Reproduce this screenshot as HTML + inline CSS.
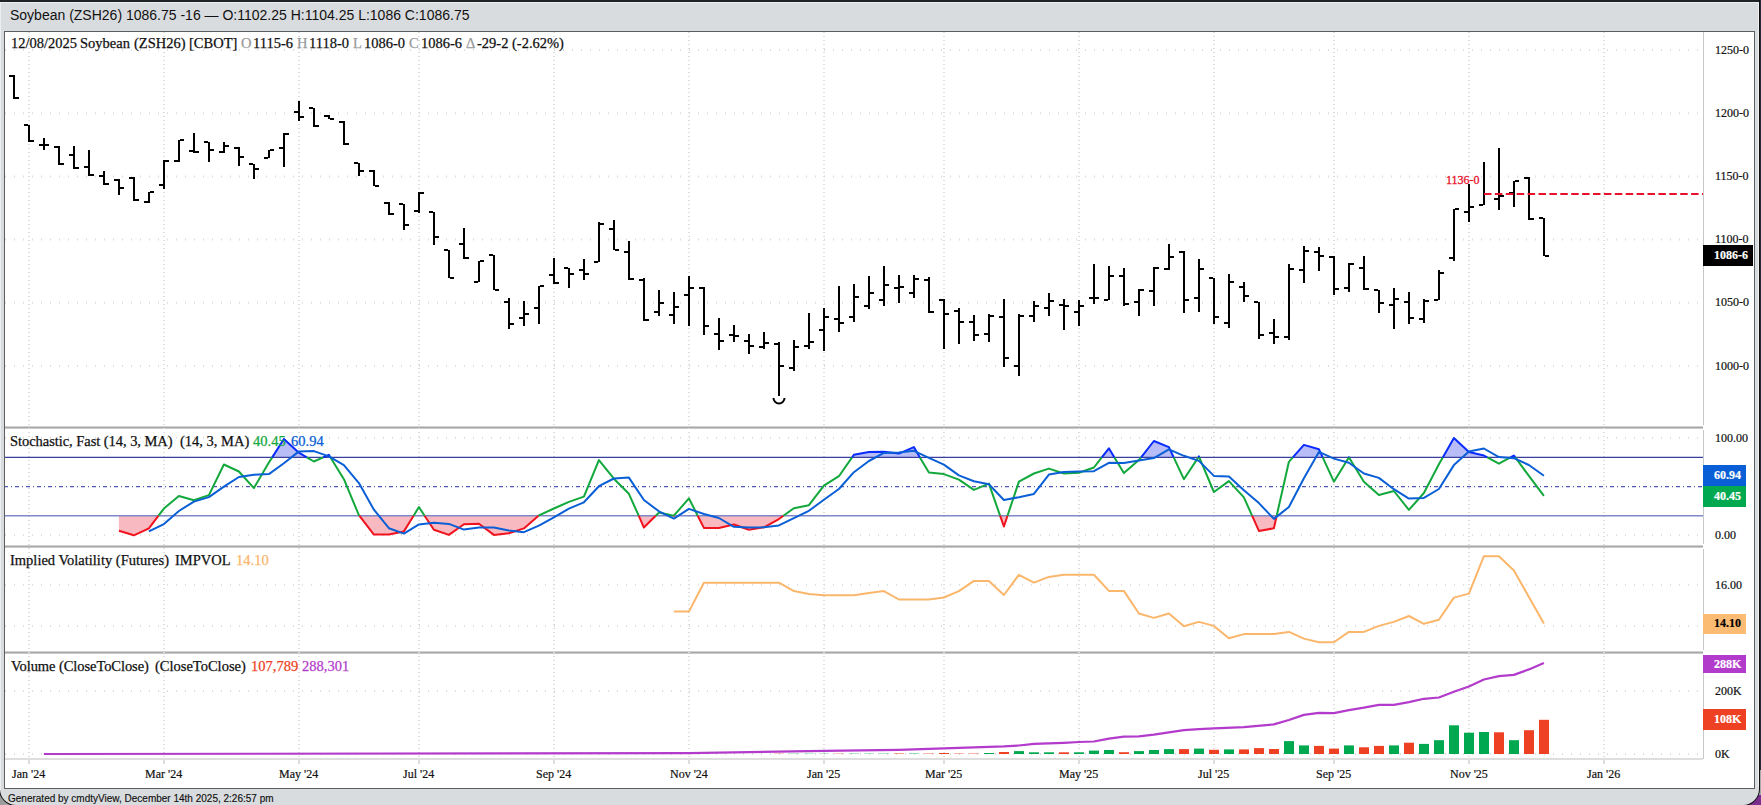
<!DOCTYPE html>
<html><head><meta charset="utf-8">
<style>
html,body{margin:0;padding:0;}
body{width:1761px;height:805px;position:relative;overflow:hidden;background:#2c2838;font-family:"Liberation Serif",serif;}
#win{position:absolute;left:0;top:0;width:1759px;height:805px;background:#d9dcdf;border-radius:0 0 16px 16px;box-shadow:0 0 0 1px #111;}
#hl{position:absolute;left:0;top:2px;width:1759px;height:1px;background:#eceef0;}
#hlL{position:absolute;left:0;top:2px;width:1px;height:788px;background:#eceef0;}
#hlR{position:absolute;left:1758px;top:2px;width:1px;height:785px;background:#eef0f2;}
.abs{position:absolute;white-space:pre;}
#topbar{position:absolute;left:0;top:0;width:1759px;height:2px;background:#1f2327;}
#hdr{left:10px;top:5px;font-family:"Liberation Sans",sans-serif;font-size:14px;line-height:20px;color:#111;}
#frame{position:absolute;left:4px;top:31px;width:1749px;height:756px;border:1px solid #5e5e5e;background:#fff;}
.chart{position:absolute;left:0;top:0;}
.sep{position:absolute;left:5px;width:1698px;height:3px;background:linear-gradient(#d2d2d2 0,#d2d2d2 1px,#a8a8a8 1px,#a8a8a8 2px,#cacaca 2px);}
.ser{font-family:"Liberation Serif",serif;font-size:14.5px;line-height:16px;color:#111;-webkit-text-stroke:0.25px currentColor;}
.ax{font-family:"Liberation Serif",serif;font-size:12px;line-height:14px;color:#111;-webkit-text-stroke:0.2px currentColor;}
.g{color:#9a9a9a;}
#foot{left:8px;top:792px;font-family:"Liberation Sans",sans-serif;font-size:10px;line-height:14px;color:#111;-webkit-text-stroke:0.15px #111;}
</style></head><body>
<div style="position:absolute;left:0;top:770px;width:20px;height:35px;background:linear-gradient(90deg,#9a9a9a,#b8b8b8)"></div>
<div style="position:absolute;left:1740px;top:795px;width:21px;height:10px;background:#7c2e8e"></div>
<div style="position:absolute;left:1740px;top:770px;width:21px;height:25px;background:#a8a8a8"></div>
<div id="win"></div><div id="hl"></div><div id="hlL"></div><div id="hlR"></div>
<div id="topbar"></div>
<div class="abs" id="hdr">Soybean (ZSH26) 1086.75 -16 — O:1102.25 H:1104.25 L:1086 C:1086.75</div>
<div id="frame"></div>
<div class="sep" style="top:426px"></div>
<div class="sep" style="top:545px"></div>
<div class="sep" style="top:651px"></div>
<div style="position:absolute;left:5px;top:758px;width:1698px;height:2px;background:#dedede"></div>
<div style="position:absolute;left:1703px;top:32px;width:1px;height:393px;background:#c8c8c8"></div>
<div style="position:absolute;left:1703px;top:430px;width:1px;height:114px;background:#c8c8c8"></div>
<div style="position:absolute;left:1703px;top:549px;width:1px;height:101px;background:#c8c8c8"></div>
<div style="position:absolute;left:1703px;top:655px;width:1px;height:104px;background:#c8c8c8"></div>
<svg class="chart" width="1761" height="805" viewBox="0 0 1761 805">
<g stroke="#dcdcdc" stroke-width="2" stroke-dasharray="1,3"><line x1="29.0" y1="32" x2="29.0" y2="759" /><line x1="164.0" y1="32" x2="164.0" y2="759" /><line x1="299.0" y1="32" x2="299.0" y2="759" /><line x1="419.0" y1="32" x2="419.0" y2="759" /><line x1="554.0" y1="32" x2="554.0" y2="759" /><line x1="689.0" y1="32" x2="689.0" y2="759" /><line x1="824.0" y1="32" x2="824.0" y2="759" /><line x1="944.0" y1="32" x2="944.0" y2="759" /><line x1="1079.0" y1="32" x2="1079.0" y2="759" /><line x1="1214.0" y1="32" x2="1214.0" y2="759" /><line x1="1334.0" y1="32" x2="1334.0" y2="759" /><line x1="1469.0" y1="32" x2="1469.0" y2="759" /><line x1="1604.0" y1="32" x2="1604.0" y2="759" /></g>
<g stroke="#dcdcdc" stroke-width="2" stroke-dasharray="1,8"><line x1="5" y1="50.0" x2="1703" y2="50.0" /><line x1="5" y1="113.2" x2="1703" y2="113.2" /><line x1="5" y1="176.4" x2="1703" y2="176.4" /><line x1="5" y1="239.6" x2="1703" y2="239.6" /><line x1="5" y1="302.8" x2="1703" y2="302.8" /><line x1="5" y1="366.0" x2="1703" y2="366.0" /><line x1="5" y1="437.8" x2="1703" y2="437.8" /><line x1="5" y1="535.2" x2="1703" y2="535.2" /><line x1="5" y1="584.8" x2="1703" y2="584.8" /><line x1="5" y1="625.9" x2="1703" y2="625.9" /><line x1="5" y1="691.0" x2="1703" y2="691.0" /><line x1="5" y1="754.0" x2="1703" y2="754.0" /></g>
<rect x="28" y="760" width="2" height="4" fill="#dedede"/><rect x="163" y="760" width="2" height="4" fill="#dedede"/><rect x="298" y="760" width="2" height="4" fill="#dedede"/><rect x="418" y="760" width="2" height="4" fill="#dedede"/><rect x="553" y="760" width="2" height="4" fill="#dedede"/><rect x="688" y="760" width="2" height="4" fill="#dedede"/><rect x="823" y="760" width="2" height="4" fill="#dedede"/><rect x="943" y="760" width="2" height="4" fill="#dedede"/><rect x="1078" y="760" width="2" height="4" fill="#dedede"/><rect x="1213" y="760" width="2" height="4" fill="#dedede"/><rect x="1333" y="760" width="2" height="4" fill="#dedede"/><rect x="1468" y="760" width="2" height="4" fill="#dedede"/><rect x="1603" y="760" width="2" height="4" fill="#dedede"/>
<g fill="#000"><rect x="13" y="75" width="2" height="24"/><rect x="9" y="75" width="4" height="2"/><rect x="15" y="97" width="4" height="2"/><rect x="28" y="125" width="2" height="17"/><rect x="24" y="124" width="4" height="2"/><rect x="30" y="140" width="4" height="2"/><rect x="43" y="138" width="2" height="12"/><rect x="39" y="144" width="4" height="2"/><rect x="45" y="144" width="4" height="2"/><rect x="58" y="146" width="2" height="19"/><rect x="54" y="146" width="4" height="2"/><rect x="60" y="163" width="4" height="2"/><rect x="73" y="146" width="2" height="23"/><rect x="69" y="154" width="4" height="2"/><rect x="75" y="167" width="4" height="2"/><rect x="88" y="150" width="2" height="26"/><rect x="84" y="166" width="4" height="2"/><rect x="90" y="174" width="4" height="2"/><rect x="103" y="171" width="2" height="14"/><rect x="99" y="175" width="4" height="2"/><rect x="105" y="183" width="4" height="2"/><rect x="118" y="179" width="2" height="16"/><rect x="114" y="179" width="4" height="2"/><rect x="120" y="187" width="4" height="2"/><rect x="133" y="177" width="2" height="24"/><rect x="129" y="177" width="4" height="2"/><rect x="135" y="199" width="4" height="2"/><rect x="148" y="192" width="2" height="11"/><rect x="144" y="201" width="4" height="2"/><rect x="150" y="191" width="4" height="2"/><rect x="163" y="160" width="2" height="29"/><rect x="159" y="184" width="4" height="2"/><rect x="165" y="160" width="4" height="2"/><rect x="178" y="140" width="2" height="22"/><rect x="174" y="160" width="4" height="2"/><rect x="180" y="139" width="4" height="2"/><rect x="193" y="133" width="2" height="20"/><rect x="189" y="150" width="4" height="2"/><rect x="195" y="151" width="4" height="2"/><rect x="208" y="142" width="2" height="20"/><rect x="204" y="141" width="4" height="2"/><rect x="210" y="149" width="4" height="2"/><rect x="223" y="142" width="2" height="11"/><rect x="219" y="151" width="4" height="2"/><rect x="225" y="145" width="4" height="2"/><rect x="238" y="147" width="2" height="19"/><rect x="234" y="147" width="4" height="2"/><rect x="240" y="156" width="4" height="2"/><rect x="253" y="164" width="2" height="15"/><rect x="249" y="163" width="4" height="2"/><rect x="255" y="168" width="4" height="2"/><rect x="268" y="150" width="2" height="8"/><rect x="264" y="157" width="4" height="2"/><rect x="270" y="149" width="4" height="2"/><rect x="283" y="133" width="2" height="34"/><rect x="279" y="147" width="4" height="2"/><rect x="285" y="133" width="4" height="2"/><rect x="298" y="101" width="2" height="20"/><rect x="294" y="111" width="4" height="2"/><rect x="300" y="116" width="4" height="2"/><rect x="313" y="108" width="2" height="19"/><rect x="309" y="107" width="4" height="2"/><rect x="315" y="125" width="4" height="2"/><rect x="328" y="115" width="2" height="4"/><rect x="324" y="115" width="4" height="2"/><rect x="330" y="118" width="4" height="2"/><rect x="343" y="121" width="2" height="24"/><rect x="339" y="121" width="4" height="2"/><rect x="345" y="143" width="4" height="2"/><rect x="358" y="163" width="2" height="13"/><rect x="354" y="162" width="4" height="2"/><rect x="360" y="170" width="4" height="2"/><rect x="373" y="170" width="2" height="16"/><rect x="369" y="170" width="4" height="2"/><rect x="375" y="185" width="4" height="2"/><rect x="388" y="202" width="2" height="13"/><rect x="384" y="202" width="4" height="2"/><rect x="390" y="213" width="4" height="2"/><rect x="403" y="204" width="2" height="26"/><rect x="399" y="203" width="4" height="2"/><rect x="405" y="224" width="4" height="2"/><rect x="418" y="192" width="2" height="21"/><rect x="414" y="210" width="4" height="2"/><rect x="420" y="192" width="4" height="2"/><rect x="433" y="212" width="2" height="33"/><rect x="429" y="211" width="4" height="2"/><rect x="435" y="236" width="4" height="2"/><rect x="448" y="250" width="2" height="28"/><rect x="444" y="249" width="4" height="2"/><rect x="450" y="277" width="4" height="2"/><rect x="463" y="228" width="2" height="31"/><rect x="459" y="243" width="4" height="2"/><rect x="465" y="257" width="4" height="2"/><rect x="478" y="261" width="2" height="21"/><rect x="474" y="281" width="4" height="2"/><rect x="480" y="260" width="4" height="2"/><rect x="493" y="255" width="2" height="35"/><rect x="489" y="254" width="4" height="2"/><rect x="495" y="289" width="4" height="2"/><rect x="508" y="298" width="2" height="31"/><rect x="504" y="301" width="4" height="2"/><rect x="510" y="323" width="4" height="2"/><rect x="523" y="301" width="2" height="25"/><rect x="519" y="317" width="4" height="2"/><rect x="525" y="313" width="4" height="2"/><rect x="538" y="286" width="2" height="38"/><rect x="534" y="307" width="4" height="2"/><rect x="540" y="285" width="4" height="2"/><rect x="553" y="258" width="2" height="26"/><rect x="549" y="274" width="4" height="2"/><rect x="555" y="282" width="4" height="2"/><rect x="568" y="268" width="2" height="20"/><rect x="564" y="267" width="4" height="2"/><rect x="570" y="273" width="4" height="2"/><rect x="583" y="259" width="2" height="21"/><rect x="579" y="269" width="4" height="2"/><rect x="585" y="273" width="4" height="2"/><rect x="598" y="222" width="2" height="40"/><rect x="594" y="261" width="4" height="2"/><rect x="600" y="223" width="4" height="2"/><rect x="613" y="220" width="2" height="30"/><rect x="609" y="228" width="4" height="2"/><rect x="615" y="249" width="4" height="2"/><rect x="628" y="241" width="2" height="39"/><rect x="624" y="251" width="4" height="2"/><rect x="630" y="278" width="4" height="2"/><rect x="643" y="278" width="2" height="43"/><rect x="639" y="279" width="4" height="2"/><rect x="645" y="319" width="4" height="2"/><rect x="658" y="290" width="2" height="26"/><rect x="654" y="311" width="4" height="2"/><rect x="660" y="302" width="4" height="2"/><rect x="673" y="292" width="2" height="32"/><rect x="669" y="314" width="4" height="2"/><rect x="675" y="306" width="4" height="2"/><rect x="688" y="276" width="2" height="50"/><rect x="684" y="294" width="4" height="2"/><rect x="690" y="287" width="4" height="2"/><rect x="703" y="287" width="2" height="48"/><rect x="699" y="287" width="4" height="2"/><rect x="705" y="325" width="4" height="2"/><rect x="718" y="318" width="2" height="32"/><rect x="714" y="333" width="4" height="2"/><rect x="720" y="340" width="4" height="2"/><rect x="733" y="325" width="2" height="17"/><rect x="729" y="334" width="4" height="2"/><rect x="735" y="335" width="4" height="2"/><rect x="748" y="334" width="2" height="20"/><rect x="744" y="340" width="4" height="2"/><rect x="750" y="345" width="4" height="2"/><rect x="763" y="332" width="2" height="17"/><rect x="759" y="346" width="4" height="2"/><rect x="765" y="342" width="4" height="2"/><rect x="778" y="342" width="2" height="54"/><rect x="774" y="343" width="4" height="2"/><rect x="780" y="365" width="4" height="2"/><rect x="793" y="340" width="2" height="31"/><rect x="789" y="367" width="4" height="2"/><rect x="795" y="346" width="4" height="2"/><rect x="808" y="313" width="2" height="36"/><rect x="804" y="345" width="4" height="2"/><rect x="810" y="341" width="4" height="2"/><rect x="823" y="308" width="2" height="43"/><rect x="819" y="329" width="4" height="2"/><rect x="825" y="316" width="4" height="2"/><rect x="838" y="286" width="2" height="46"/><rect x="834" y="318" width="4" height="2"/><rect x="840" y="322" width="4" height="2"/><rect x="853" y="284" width="2" height="38"/><rect x="849" y="316" width="4" height="2"/><rect x="855" y="296" width="4" height="2"/><rect x="868" y="276" width="2" height="33"/><rect x="864" y="305" width="4" height="2"/><rect x="870" y="292" width="4" height="2"/><rect x="883" y="266" width="2" height="40"/><rect x="879" y="299" width="4" height="2"/><rect x="885" y="284" width="4" height="2"/><rect x="898" y="275" width="2" height="28"/><rect x="894" y="287" width="4" height="2"/><rect x="900" y="286" width="4" height="2"/><rect x="913" y="275" width="2" height="23"/><rect x="909" y="292" width="4" height="2"/><rect x="915" y="278" width="4" height="2"/><rect x="928" y="277" width="2" height="36"/><rect x="924" y="279" width="4" height="2"/><rect x="930" y="311" width="4" height="2"/><rect x="943" y="299" width="2" height="50"/><rect x="939" y="299" width="4" height="2"/><rect x="945" y="313" width="4" height="2"/><rect x="958" y="308" width="2" height="36"/><rect x="954" y="310" width="4" height="2"/><rect x="960" y="321" width="4" height="2"/><rect x="973" y="315" width="2" height="26"/><rect x="969" y="321" width="4" height="2"/><rect x="975" y="334" width="4" height="2"/><rect x="988" y="314" width="2" height="28"/><rect x="984" y="333" width="4" height="2"/><rect x="990" y="315" width="4" height="2"/><rect x="1003" y="299" width="2" height="68"/><rect x="999" y="316" width="4" height="2"/><rect x="1005" y="357" width="4" height="2"/><rect x="1018" y="314" width="2" height="62"/><rect x="1014" y="365" width="4" height="2"/><rect x="1020" y="315" width="4" height="2"/><rect x="1033" y="301" width="2" height="21"/><rect x="1029" y="315" width="4" height="2"/><rect x="1035" y="305" width="4" height="2"/><rect x="1048" y="293" width="2" height="23"/><rect x="1044" y="307" width="4" height="2"/><rect x="1050" y="300" width="4" height="2"/><rect x="1063" y="299" width="2" height="31"/><rect x="1059" y="304" width="4" height="2"/><rect x="1065" y="305" width="4" height="2"/><rect x="1078" y="300" width="2" height="26"/><rect x="1074" y="311" width="4" height="2"/><rect x="1080" y="305" width="4" height="2"/><rect x="1093" y="264" width="2" height="40"/><rect x="1089" y="297" width="4" height="2"/><rect x="1095" y="297" width="4" height="2"/><rect x="1108" y="266" width="2" height="34"/><rect x="1104" y="299" width="4" height="2"/><rect x="1110" y="275" width="4" height="2"/><rect x="1123" y="268" width="2" height="38"/><rect x="1119" y="275" width="4" height="2"/><rect x="1125" y="303" width="4" height="2"/><rect x="1138" y="289" width="2" height="27"/><rect x="1134" y="301" width="4" height="2"/><rect x="1140" y="289" width="4" height="2"/><rect x="1153" y="267" width="2" height="39"/><rect x="1149" y="290" width="4" height="2"/><rect x="1155" y="267" width="4" height="2"/><rect x="1168" y="244" width="2" height="26"/><rect x="1164" y="268" width="4" height="2"/><rect x="1170" y="256" width="4" height="2"/><rect x="1183" y="251" width="2" height="62"/><rect x="1179" y="251" width="4" height="2"/><rect x="1185" y="299" width="4" height="2"/><rect x="1198" y="259" width="2" height="53"/><rect x="1194" y="297" width="4" height="2"/><rect x="1200" y="268" width="4" height="2"/><rect x="1213" y="278" width="2" height="46"/><rect x="1209" y="277" width="4" height="2"/><rect x="1215" y="316" width="4" height="2"/><rect x="1228" y="274" width="2" height="54"/><rect x="1224" y="322" width="4" height="2"/><rect x="1230" y="281" width="4" height="2"/><rect x="1243" y="282" width="2" height="20"/><rect x="1239" y="286" width="4" height="2"/><rect x="1245" y="295" width="4" height="2"/><rect x="1258" y="302" width="2" height="37"/><rect x="1254" y="301" width="4" height="2"/><rect x="1260" y="334" width="4" height="2"/><rect x="1273" y="319" width="2" height="25"/><rect x="1269" y="332" width="4" height="2"/><rect x="1275" y="336" width="4" height="2"/><rect x="1288" y="264" width="2" height="76"/><rect x="1284" y="336" width="4" height="2"/><rect x="1290" y="268" width="4" height="2"/><rect x="1303" y="246" width="2" height="37"/><rect x="1299" y="269" width="4" height="2"/><rect x="1305" y="250" width="4" height="2"/><rect x="1318" y="247" width="2" height="24"/><rect x="1314" y="251" width="4" height="2"/><rect x="1320" y="255" width="4" height="2"/><rect x="1333" y="256" width="2" height="39"/><rect x="1329" y="256" width="4" height="2"/><rect x="1335" y="288" width="4" height="2"/><rect x="1348" y="263" width="2" height="29"/><rect x="1344" y="287" width="4" height="2"/><rect x="1350" y="263" width="4" height="2"/><rect x="1363" y="256" width="2" height="34"/><rect x="1359" y="267" width="4" height="2"/><rect x="1365" y="288" width="4" height="2"/><rect x="1378" y="290" width="2" height="23"/><rect x="1374" y="289" width="4" height="2"/><rect x="1380" y="302" width="4" height="2"/><rect x="1393" y="288" width="2" height="41"/><rect x="1389" y="304" width="4" height="2"/><rect x="1395" y="298" width="4" height="2"/><rect x="1408" y="292" width="2" height="32"/><rect x="1404" y="301" width="4" height="2"/><rect x="1410" y="317" width="4" height="2"/><rect x="1423" y="299" width="2" height="24"/><rect x="1419" y="318" width="4" height="2"/><rect x="1425" y="300" width="4" height="2"/><rect x="1438" y="270" width="2" height="30"/><rect x="1434" y="299" width="4" height="2"/><rect x="1440" y="272" width="4" height="2"/><rect x="1453" y="209" width="2" height="52"/><rect x="1449" y="257" width="4" height="2"/><rect x="1455" y="208" width="4" height="2"/><rect x="1468" y="184" width="2" height="38"/><rect x="1464" y="211" width="4" height="2"/><rect x="1470" y="206" width="4" height="2"/><rect x="1483" y="162" width="2" height="43"/><rect x="1479" y="204" width="4" height="2"/><rect x="1485" y="193" width="4" height="2"/><rect x="1498" y="148" width="2" height="62"/><rect x="1494" y="198" width="4" height="2"/><rect x="1500" y="195" width="4" height="2"/><rect x="1513" y="181" width="2" height="26"/><rect x="1509" y="192" width="4" height="2"/><rect x="1515" y="180" width="4" height="2"/><rect x="1528" y="177" width="2" height="43"/><rect x="1524" y="177" width="4" height="2"/><rect x="1530" y="218" width="4" height="2"/><rect x="1543" y="218" width="2" height="38"/><rect x="1539" y="217" width="4" height="2"/><rect x="1545" y="255" width="4" height="2"/></g>
<path d="M773.5,398 a5.5,5.5 0 0 0 11,0" fill="none" stroke="#000" stroke-width="2"/>
<line x1="1484" y1="194" x2="1703" y2="194" stroke="#e8102a" stroke-width="2.2" stroke-dasharray="7.5,3.4"/>
<polygon fill="#f9b9c0" points="118.9,515.7 118.9,530.7 133.9,535.3 148.9,528.3 158.5,515.7 158.5,515.7"/><polygon fill="#b9bdf7" points="272.2,457.4 272.2,457.4 283.9,439.0 298.9,452.7 306.8,457.4 306.8,457.4"/><polygon fill="#b9bdf7" points="323.2,457.4 323.2,457.4 328.9,454.8 330.5,457.4 330.5,457.4"/><polygon fill="#f9b9c0" points="359.3,515.7 359.3,515.7 373.9,534.6 388.9,534.6 403.9,531.4 413.6,515.7 413.6,515.7"/><polygon fill="#f9b9c0" points="424.6,515.7 424.6,515.7 433.9,529.8 448.9,534.9 463.9,524.2 478.9,523.7 493.9,534.9 508.9,533.3 523.9,528.4 538.5,515.7 538.5,515.7"/><polygon fill="#f9b9c0" points="638.7,515.7 638.7,515.7 643.9,527.5 655.7,515.7 655.7,515.7"/><polygon fill="#f9b9c0" points="673.7,515.7 673.7,515.7 673.9,515.8 673.9,515.7 673.9,515.7"/><polygon fill="#f9b9c0" points="697.7,515.7 697.7,515.7 703.9,527.9 718.9,528.0 733.9,524.5 748.9,529.8 763.9,527.3 778.9,519.0 783.4,515.7 783.4,515.7"/><polygon fill="#b9bdf7" points="852.1,457.4 852.1,457.4 853.9,454.8 868.9,452.1 883.9,451.7 898.9,453.6 913.9,447.1 919.9,457.4 919.9,457.4"/><polygon fill="#f9b9c0" points="1000.1,515.7 1000.1,515.7 1003.9,526.5 1007.5,515.7 1007.5,515.7"/><polygon fill="#b9bdf7" points="1101.8,457.4 1101.8,457.4 1108.9,448.3 1114.4,457.4 1114.4,457.4"/><polygon fill="#b9bdf7" points="1141.1,457.4 1141.1,457.4 1153.9,441.0 1168.9,447.2 1173.7,457.4 1173.7,457.4"/><polygon fill="#b9bdf7" points="1198.3,457.4 1198.3,457.4 1198.9,456.4 1199.3,457.4 1199.3,457.4"/><polygon fill="#f9b9c0" points="1252.1,515.7 1252.1,515.7 1258.9,530.9 1273.9,528.3 1276.7,515.7 1276.7,515.7"/><polygon fill="#b9bdf7" points="1292.8,457.4 1292.8,457.4 1303.9,444.9 1318.9,449.2 1322.7,457.4 1322.7,457.4"/><polygon fill="#b9bdf7" points="1348.8,457.4 1348.8,457.4 1348.9,457.2 1349.0,457.4 1349.0,457.4"/><polygon fill="#b9bdf7" points="1442.8,457.4 1442.8,457.4 1453.9,438.0 1468.9,452.0 1483.9,455.5 1487.3,457.4 1487.3,457.4"/><polygon fill="#b9bdf7" points="1510.5,457.4 1510.5,457.4 1513.9,455.5 1515.3,457.4 1515.3,457.4"/><line x1="5" y1="457.4" x2="1703" y2="457.4" stroke="#3a3f9e" stroke-width="1.2"/><line x1="5" y1="515.7" x2="1703" y2="515.7" stroke="#8088c8" stroke-width="1.5"/><line x1="5" y1="486.6" x2="1703" y2="486.6" stroke="#5058b4" stroke-width="1.4" stroke-dasharray="4,3,1,3" stroke-dashoffset="1"/><polyline fill="none" stroke="#f0131e" stroke-width="2" stroke-linejoin="round" points="118.9,530.7 133.9,535.3 148.9,528.3 158.5,515.7"/><polyline fill="none" stroke="#12a83c" stroke-width="2" stroke-linejoin="round" points="158.5,515.7 163.9,508.6 178.9,496.0 193.9,500.3 208.9,495.1 223.9,464.5 238.9,471.5 253.9,488.1 268.9,462.5 272.2,457.4"/><polyline fill="none" stroke="#0a2bff" stroke-width="2" stroke-linejoin="round" points="272.2,457.4 283.9,439.0 298.9,452.7 306.8,457.4"/><polyline fill="none" stroke="#12a83c" stroke-width="2" stroke-linejoin="round" points="306.8,457.4 313.9,461.5 323.2,457.4"/><polyline fill="none" stroke="#0a2bff" stroke-width="2" stroke-linejoin="round" points="323.2,457.4 328.9,454.8 330.5,457.4"/><polyline fill="none" stroke="#12a83c" stroke-width="2" stroke-linejoin="round" points="330.5,457.4 343.9,479.2 358.9,515.2 359.3,515.7"/><polyline fill="none" stroke="#f0131e" stroke-width="2" stroke-linejoin="round" points="359.3,515.7 373.9,534.6 388.9,534.6 403.9,531.4 413.6,515.7"/><polyline fill="none" stroke="#12a83c" stroke-width="2" stroke-linejoin="round" points="413.6,515.7 418.9,507.1 424.6,515.7"/><polyline fill="none" stroke="#f0131e" stroke-width="2" stroke-linejoin="round" points="424.6,515.7 433.9,529.8 448.9,534.9 463.9,524.2 478.9,523.7 493.9,534.9 508.9,533.3 523.9,528.4 538.5,515.7"/><polyline fill="none" stroke="#12a83c" stroke-width="2" stroke-linejoin="round" points="538.5,515.7 538.9,515.4 553.9,508.5 568.9,501.9 583.9,496.6 598.9,460.1 613.9,478.7 628.9,493.8 638.7,515.7"/><polyline fill="none" stroke="#f0131e" stroke-width="2" stroke-linejoin="round" points="638.7,515.7 643.9,527.5 655.7,515.7"/><polyline fill="none" stroke="#12a83c" stroke-width="2" stroke-linejoin="round" points="655.7,515.7 658.9,512.6 673.7,515.7"/><polyline fill="none" stroke="#f0131e" stroke-width="2" stroke-linejoin="round" points="673.7,515.7 673.9,515.8 673.9,515.7"/><polyline fill="none" stroke="#12a83c" stroke-width="2" stroke-linejoin="round" points="673.9,515.7 688.9,498.3 697.7,515.7"/><polyline fill="none" stroke="#f0131e" stroke-width="2" stroke-linejoin="round" points="697.7,515.7 703.9,527.9 718.9,528.0 733.9,524.5 748.9,529.8 763.9,527.3 778.9,519.0 783.4,515.7"/><polyline fill="none" stroke="#12a83c" stroke-width="2" stroke-linejoin="round" points="783.4,515.7 793.9,508.2 808.9,505.2 823.9,485.6 838.9,476.2 852.1,457.4"/><polyline fill="none" stroke="#0a2bff" stroke-width="2" stroke-linejoin="round" points="852.1,457.4 853.9,454.8 868.9,452.1 883.9,451.7 898.9,453.6 913.9,447.1 919.9,457.4"/><polyline fill="none" stroke="#12a83c" stroke-width="2" stroke-linejoin="round" points="919.9,457.4 928.9,472.6 943.9,474.1 958.9,479.6 973.9,489.9 988.9,483.6 1000.1,515.7"/><polyline fill="none" stroke="#f0131e" stroke-width="2" stroke-linejoin="round" points="1000.1,515.7 1003.9,526.5 1007.5,515.7"/><polyline fill="none" stroke="#12a83c" stroke-width="2" stroke-linejoin="round" points="1007.5,515.7 1018.9,481.6 1033.9,473.5 1048.9,468.6 1063.9,473.5 1078.9,472.7 1093.9,467.5 1101.8,457.4"/><polyline fill="none" stroke="#0a2bff" stroke-width="2" stroke-linejoin="round" points="1101.8,457.4 1108.9,448.3 1114.4,457.4"/><polyline fill="none" stroke="#12a83c" stroke-width="2" stroke-linejoin="round" points="1114.4,457.4 1123.9,473.1 1138.9,460.1 1141.1,457.4"/><polyline fill="none" stroke="#0a2bff" stroke-width="2" stroke-linejoin="round" points="1141.1,457.4 1153.9,441.0 1168.9,447.2 1173.7,457.4"/><polyline fill="none" stroke="#12a83c" stroke-width="2" stroke-linejoin="round" points="1173.7,457.4 1183.9,479.2 1198.3,457.4"/><polyline fill="none" stroke="#0a2bff" stroke-width="2" stroke-linejoin="round" points="1198.3,457.4 1198.9,456.4 1199.3,457.4"/><polyline fill="none" stroke="#12a83c" stroke-width="2" stroke-linejoin="round" points="1199.3,457.4 1213.9,492.0 1228.9,481.1 1243.9,497.4 1252.1,515.7"/><polyline fill="none" stroke="#f0131e" stroke-width="2" stroke-linejoin="round" points="1252.1,515.7 1258.9,530.9 1273.9,528.3 1276.7,515.7"/><polyline fill="none" stroke="#12a83c" stroke-width="2" stroke-linejoin="round" points="1276.7,515.7 1288.9,461.8 1292.8,457.4"/><polyline fill="none" stroke="#0a2bff" stroke-width="2" stroke-linejoin="round" points="1292.8,457.4 1303.9,444.9 1318.9,449.2 1322.7,457.4"/><polyline fill="none" stroke="#12a83c" stroke-width="2" stroke-linejoin="round" points="1322.7,457.4 1333.9,481.7 1348.8,457.4"/><polyline fill="none" stroke="#0a2bff" stroke-width="2" stroke-linejoin="round" points="1348.8,457.4 1348.9,457.2 1349.0,457.4"/><polyline fill="none" stroke="#12a83c" stroke-width="2" stroke-linejoin="round" points="1349.0,457.4 1363.9,481.7 1378.9,495.0 1393.9,491.0 1408.9,509.9 1423.9,493.0 1438.9,464.2 1442.8,457.4"/><polyline fill="none" stroke="#0a2bff" stroke-width="2" stroke-linejoin="round" points="1442.8,457.4 1453.9,438.0 1468.9,452.0 1483.9,455.5 1487.3,457.4"/><polyline fill="none" stroke="#12a83c" stroke-width="2" stroke-linejoin="round" points="1487.3,457.4 1498.9,463.7 1510.5,457.4"/><polyline fill="none" stroke="#0a2bff" stroke-width="2" stroke-linejoin="round" points="1510.5,457.4 1513.9,455.5 1515.3,457.4"/><polyline fill="none" stroke="#12a83c" stroke-width="2" stroke-linejoin="round" points="1515.3,457.4 1528.9,475.9 1543.9,495.8"/><polyline fill="none" stroke="#0a5fd6" stroke-width="2" stroke-linejoin="round" points="148.9,531.4 163.9,524.1 178.9,511.0 193.9,501.6 208.9,497.1 223.9,486.6 238.9,477.0 253.9,474.7 268.9,474.1 283.9,463.2 298.9,451.4 313.9,451.1 328.9,456.4 343.9,465.2 358.9,483.1 373.9,509.7 388.9,528.2 403.9,533.6 418.9,524.4 433.9,522.8 448.9,523.9 463.9,529.6 478.9,527.6 493.9,527.6 508.9,530.6 523.9,532.2 538.9,525.7 553.9,517.4 568.9,508.6 583.9,502.3 598.9,486.2 613.9,478.5 628.9,477.6 643.9,500.0 658.9,511.3 673.9,518.6 688.9,508.9 703.9,514.0 718.9,518.0 733.9,526.8 748.9,527.4 763.9,527.2 778.9,525.4 793.9,518.2 808.9,510.8 823.9,499.7 838.9,489.0 853.9,472.2 868.9,461.0 883.9,452.9 898.9,452.5 913.9,450.8 928.9,457.8 943.9,464.6 958.9,475.4 973.9,481.2 988.9,484.3 1003.9,500.0 1018.9,497.2 1033.9,493.9 1048.9,474.6 1063.9,471.9 1078.9,471.6 1093.9,471.2 1108.9,462.8 1123.9,463.0 1138.9,460.5 1153.9,458.1 1168.9,449.4 1183.9,455.8 1198.9,460.9 1213.9,475.9 1228.9,476.5 1243.9,490.2 1258.9,503.1 1273.9,518.9 1288.9,507.0 1303.9,478.3 1318.9,451.9 1333.9,458.6 1348.9,462.7 1363.9,473.5 1378.9,477.9 1393.9,489.2 1408.9,498.6 1423.9,497.9 1438.9,489.0 1453.9,465.1 1468.9,451.4 1483.9,448.5 1498.9,457.1 1513.9,458.2 1528.9,465.0 1543.9,475.7"/>
<polyline fill="none" stroke="#fab66b" stroke-width="2" stroke-linejoin="round" points="673.9,611.6 688.9,611.6 703.9,582.7 718.9,582.7 733.9,582.7 748.9,582.7 763.9,582.7 778.9,582.7 793.9,591.1 808.9,593.9 823.9,595.2 838.9,595.2 853.9,595.2 868.9,593.0 883.9,591.1 898.9,599.5 913.9,599.5 928.9,599.5 943.9,597.5 958.9,591.1 973.9,580.9 988.9,580.9 1003.9,595.0 1018.9,574.8 1033.9,582.6 1048.9,576.9 1063.9,574.7 1078.9,574.7 1093.9,574.7 1108.9,590.9 1123.9,590.9 1138.9,613.5 1153.9,617.9 1168.9,613.5 1183.9,626.2 1198.9,621.9 1213.9,625.9 1228.9,638.3 1243.9,634.1 1258.9,634.1 1273.9,634.1 1288.9,631.9 1303.9,638.6 1318.9,642.2 1333.9,642.2 1348.9,631.9 1363.9,631.9 1378.9,625.9 1393.9,621.9 1408.9,616.0 1423.9,623.8 1438.9,619.8 1453.9,597.6 1468.9,593.6 1483.9,556.2 1498.9,556.2 1513.9,570.5 1528.9,597.0 1543.9,623.5"/>
<rect x="999" y="752.0" width="10" height="2.0" fill="#ee4124"/><rect x="1014" y="751.1" width="10" height="2.9" fill="#00a84f"/><rect x="1029" y="752.3" width="10" height="1.7" fill="#00a84f"/><rect x="1044" y="752.3" width="10" height="1.7" fill="#00a84f"/><rect x="1059" y="752.3" width="10" height="1.7" fill="#ee4124"/><rect x="1074" y="752.3" width="10" height="1.7" fill="#00a84f"/><rect x="1089" y="750.6" width="10" height="3.4" fill="#00a84f"/><rect x="1104" y="750.0" width="10" height="4.0" fill="#00a84f"/><rect x="1119" y="752.2" width="10" height="1.8" fill="#ee4124"/><rect x="1134" y="751.1" width="10" height="2.9" fill="#00a84f"/><rect x="1149" y="750.0" width="10" height="4.0" fill="#00a84f"/><rect x="1164" y="749.1" width="10" height="4.9" fill="#00a84f"/><rect x="1179" y="749.1" width="10" height="4.9" fill="#ee4124"/><rect x="1194" y="748.6" width="10" height="5.4" fill="#00a84f"/><rect x="1209" y="749.8" width="10" height="4.2" fill="#ee4124"/><rect x="1224" y="749.4" width="10" height="4.6" fill="#00a84f"/><rect x="1239" y="749.4" width="10" height="4.6" fill="#ee4124"/><rect x="1254" y="748.1" width="10" height="5.9" fill="#ee4124"/><rect x="1269" y="749.0" width="10" height="5.0" fill="#ee4124"/><rect x="1284" y="741.1" width="10" height="12.9" fill="#00a84f"/><rect x="1299" y="745.4" width="10" height="8.6" fill="#00a84f"/><rect x="1314" y="745.9" width="10" height="8.1" fill="#ee4124"/><rect x="1329" y="748.6" width="10" height="5.4" fill="#ee4124"/><rect x="1344" y="745.4" width="10" height="8.6" fill="#00a84f"/><rect x="1359" y="747.3" width="10" height="6.7" fill="#ee4124"/><rect x="1374" y="745.9" width="10" height="8.1" fill="#ee4124"/><rect x="1389" y="745.4" width="10" height="8.6" fill="#00a84f"/><rect x="1404" y="742.7" width="10" height="11.3" fill="#ee4124"/><rect x="1419" y="743.9" width="10" height="10.1" fill="#00a84f"/><rect x="1434" y="740.2" width="10" height="13.8" fill="#00a84f"/><rect x="1449" y="725.3" width="10" height="28.7" fill="#00a84f"/><rect x="1464" y="732.7" width="10" height="21.3" fill="#00a84f"/><rect x="1479" y="732.0" width="10" height="22.0" fill="#00a84f"/><rect x="1494" y="732.3" width="10" height="21.7" fill="#ee4124"/><rect x="1509" y="740.2" width="10" height="13.8" fill="#00a84f"/><rect x="1524" y="730.2" width="10" height="23.8" fill="#ee4124"/><rect x="1539" y="719.8" width="10" height="34.2" fill="#ee4124"/><rect x="894" y="753" width="10" height="1" fill="#ee4124" opacity="0.5"/><rect x="909" y="753" width="10" height="1" fill="#00a84f" opacity="0.4"/><rect x="924" y="753" width="10" height="1" fill="#ee4124" opacity="0.4"/><rect x="939" y="753" width="10" height="1" fill="#ee4124" opacity="1.0"/><rect x="954" y="753" width="10" height="1" fill="#ee4124" opacity="0.4"/><rect x="969" y="753" width="10" height="1" fill="#ee4124" opacity="0.4"/><rect x="984" y="753" width="10" height="1" fill="#00a84f" opacity="1.0"/><rect x="834" y="753" width="10" height="1" fill="#ee4124" opacity="0.3"/><rect x="849" y="753" width="10" height="1" fill="#00a84f" opacity="0.3"/><rect x="864" y="753" width="10" height="1" fill="#00a84f" opacity="0.3"/><rect x="879" y="753" width="10" height="1" fill="#00a84f" opacity="0.3"/><rect x="774" y="753" width="10" height="1" fill="#ee4124" opacity="0.25"/><rect x="789" y="753" width="10" height="1" fill="#00a84f" opacity="0.25"/><rect x="804" y="753" width="10" height="1" fill="#00a84f" opacity="0.25"/><rect x="819" y="753" width="10" height="1" fill="#00a84f" opacity="0.25"/>
<polyline fill="none" stroke="#b33bcb" stroke-width="2.2" stroke-linejoin="round" points="43.9,754.0 688.9,753.2 823.9,750.8 898.9,749.8 1003.9,746.4 1018.9,745.5 1033.9,743.8 1063.9,742.8 1078.9,742.0 1093.9,741.5 1108.9,738.6 1123.9,736.6 1138.9,736.4 1153.9,734.7 1168.9,732.4 1183.9,730.1 1198.9,729.2 1213.9,728.4 1243.9,727.1 1273.9,724.4 1288.9,720.0 1303.9,714.9 1318.9,712.8 1333.9,713.1 1348.9,710.1 1363.9,707.7 1378.9,704.8 1393.9,704.8 1408.9,702.1 1423.9,698.8 1438.9,697.5 1453.9,691.7 1468.9,686.5 1483.9,679.5 1498.9,676.1 1513.9,674.9 1528.9,669.4 1543.9,663.1"/>
</svg>
<div class="ser">
<span class="abs" style="left:11px;top:35px">12/08/2025</span>
<span class="abs" style="left:80px;top:35px">Soybean</span>
<span class="abs" style="left:134px;top:35px">(ZSH26)</span>
<span class="abs" style="left:189px;top:35px">[CBOT]</span>
<span class="abs g" style="left:241px;top:35px">O</span>
<span class="abs" style="left:253px;top:35px">1115-6</span>
<span class="abs g" style="left:297px;top:35px">H</span>
<span class="abs" style="left:309px;top:35px">1118-0</span>
<span class="abs g" style="left:353px;top:35px">L</span>
<span class="abs" style="left:364px;top:35px">1086-0</span>
<span class="abs g" style="left:409px;top:35px">C</span>
<span class="abs" style="left:421px;top:35px">1086-6</span>
<span class="abs g" style="left:466px;top:35px">Δ</span>
<span class="abs" style="left:477px;top:35px">-29-2</span>
<span class="abs" style="left:512px;top:35px">(-2.62%)</span>
</div>
<div class="abs" style="left:1446px;top:173px;font-size:12px;line-height:14px;color:#e8102a;-webkit-text-stroke:0.3px #e8102a">1136-0</div>

<div class="abs ax" style="left:1715px;top:43px">1250-0</div>
<div class="abs ax" style="left:1715px;top:106px">1200-0</div>
<div class="abs ax" style="left:1715px;top:169px">1150-0</div>
<div class="abs ax" style="left:1715px;top:232px">1100-0</div>
<div class="abs ax" style="left:1715px;top:295px">1050-0</div>
<div class="abs ax" style="left:1715px;top:359px">1000-0</div>
<div style="position:absolute;left:1703px;top:245px;width:50px;height:21px;background:#000"></div>
<div class="abs ax" style="left:1714px;top:248px;color:#fff;font-weight:bold">1086-6</div>

<div class="ser">
<span class="abs" style="left:10px;top:433px;letter-spacing:-0.05px">Stochastic, Fast (14, 3, MA)</span>
<span class="abs" style="left:180px;top:433px">(14, 3, MA)</span>
<span class="abs" style="left:253px;top:433px;color:#12a83c">40.45</span>
<span class="abs" style="left:291px;top:433px;color:#0a5fd6">60.94</span>
</div>
<div class="abs ax" style="left:1715px;top:431px">100.00</div>
<div class="abs ax" style="left:1715px;top:528px">0.00</div>
<div style="position:absolute;left:1703px;top:465px;width:43px;height:21px;background:#0a5fd6"></div>
<div style="position:absolute;left:1703px;top:486px;width:43px;height:21px;background:#00a84f"></div>
<div class="abs ax" style="left:1714px;top:468px;color:#fff;font-weight:bold">60.94</div>
<div class="abs ax" style="left:1714px;top:489px;color:#fff;font-weight:bold">40.45</div>

<div class="ser">
<span class="abs" style="left:10px;top:552px">Implied Volatility (Futures)</span>
<span class="abs" style="left:175px;top:552px">IMPVOL</span>
<span class="abs" style="left:236px;top:552px;color:#fab66b">14.10</span>
</div>
<div class="abs ax" style="left:1715px;top:578px">16.00</div>
<div style="position:absolute;left:1703px;top:614px;width:43px;height:20px;background:#fbbb72"></div>
<div class="abs ax" style="left:1714px;top:616px;color:#000;font-weight:bold">14.10</div>

<div class="ser">
<span class="abs" style="left:11px;top:658px;letter-spacing:-0.07px">Volume (CloseToClose)</span>
<span class="abs" style="left:155px;top:658px">(CloseToClose)</span>
<span class="abs" style="left:251px;top:658px;color:#ee4124">107,789</span>
<span class="abs" style="left:302px;top:658px;color:#b33bcb">288,301</span>
</div>
<div style="position:absolute;left:1703px;top:655px;width:43px;height:18px;background:#b33bcb"></div>
<div class="abs ax" style="left:1714px;top:657px;color:#fff;font-weight:bold">288K</div>
<div class="abs ax" style="left:1715px;top:684px">200K</div>
<div style="position:absolute;left:1703px;top:709px;width:43px;height:21px;background:#ee4124"></div>
<div class="abs ax" style="left:1714px;top:712px;color:#fff;font-weight:bold">108K</div>
<div class="abs ax" style="left:1715px;top:747px">0K</div>

<div class="abs ax" style="left:12px;top:767px">Jan '24</div>
<div class="abs ax" style="left:145px;top:767px">Mar '24</div>
<div class="abs ax" style="left:279px;top:767px">May '24</div>
<div class="abs ax" style="left:403px;top:767px">Jul '24</div>
<div class="abs ax" style="left:536px;top:767px">Sep '24</div>
<div class="abs ax" style="left:670px;top:767px">Nov '24</div>
<div class="abs ax" style="left:807px;top:767px">Jan '25</div>
<div class="abs ax" style="left:925px;top:767px">Mar '25</div>
<div class="abs ax" style="left:1059px;top:767px">May '25</div>
<div class="abs ax" style="left:1198px;top:767px">Jul '25</div>
<div class="abs ax" style="left:1316px;top:767px">Sep '25</div>
<div class="abs ax" style="left:1450px;top:767px">Nov '25</div>
<div class="abs ax" style="left:1587px;top:767px">Jan '26</div>

<div class="abs" id="foot">Generated by cmdtyView, December 14th 2025, 2:26:57 pm</div>
</body></html>
